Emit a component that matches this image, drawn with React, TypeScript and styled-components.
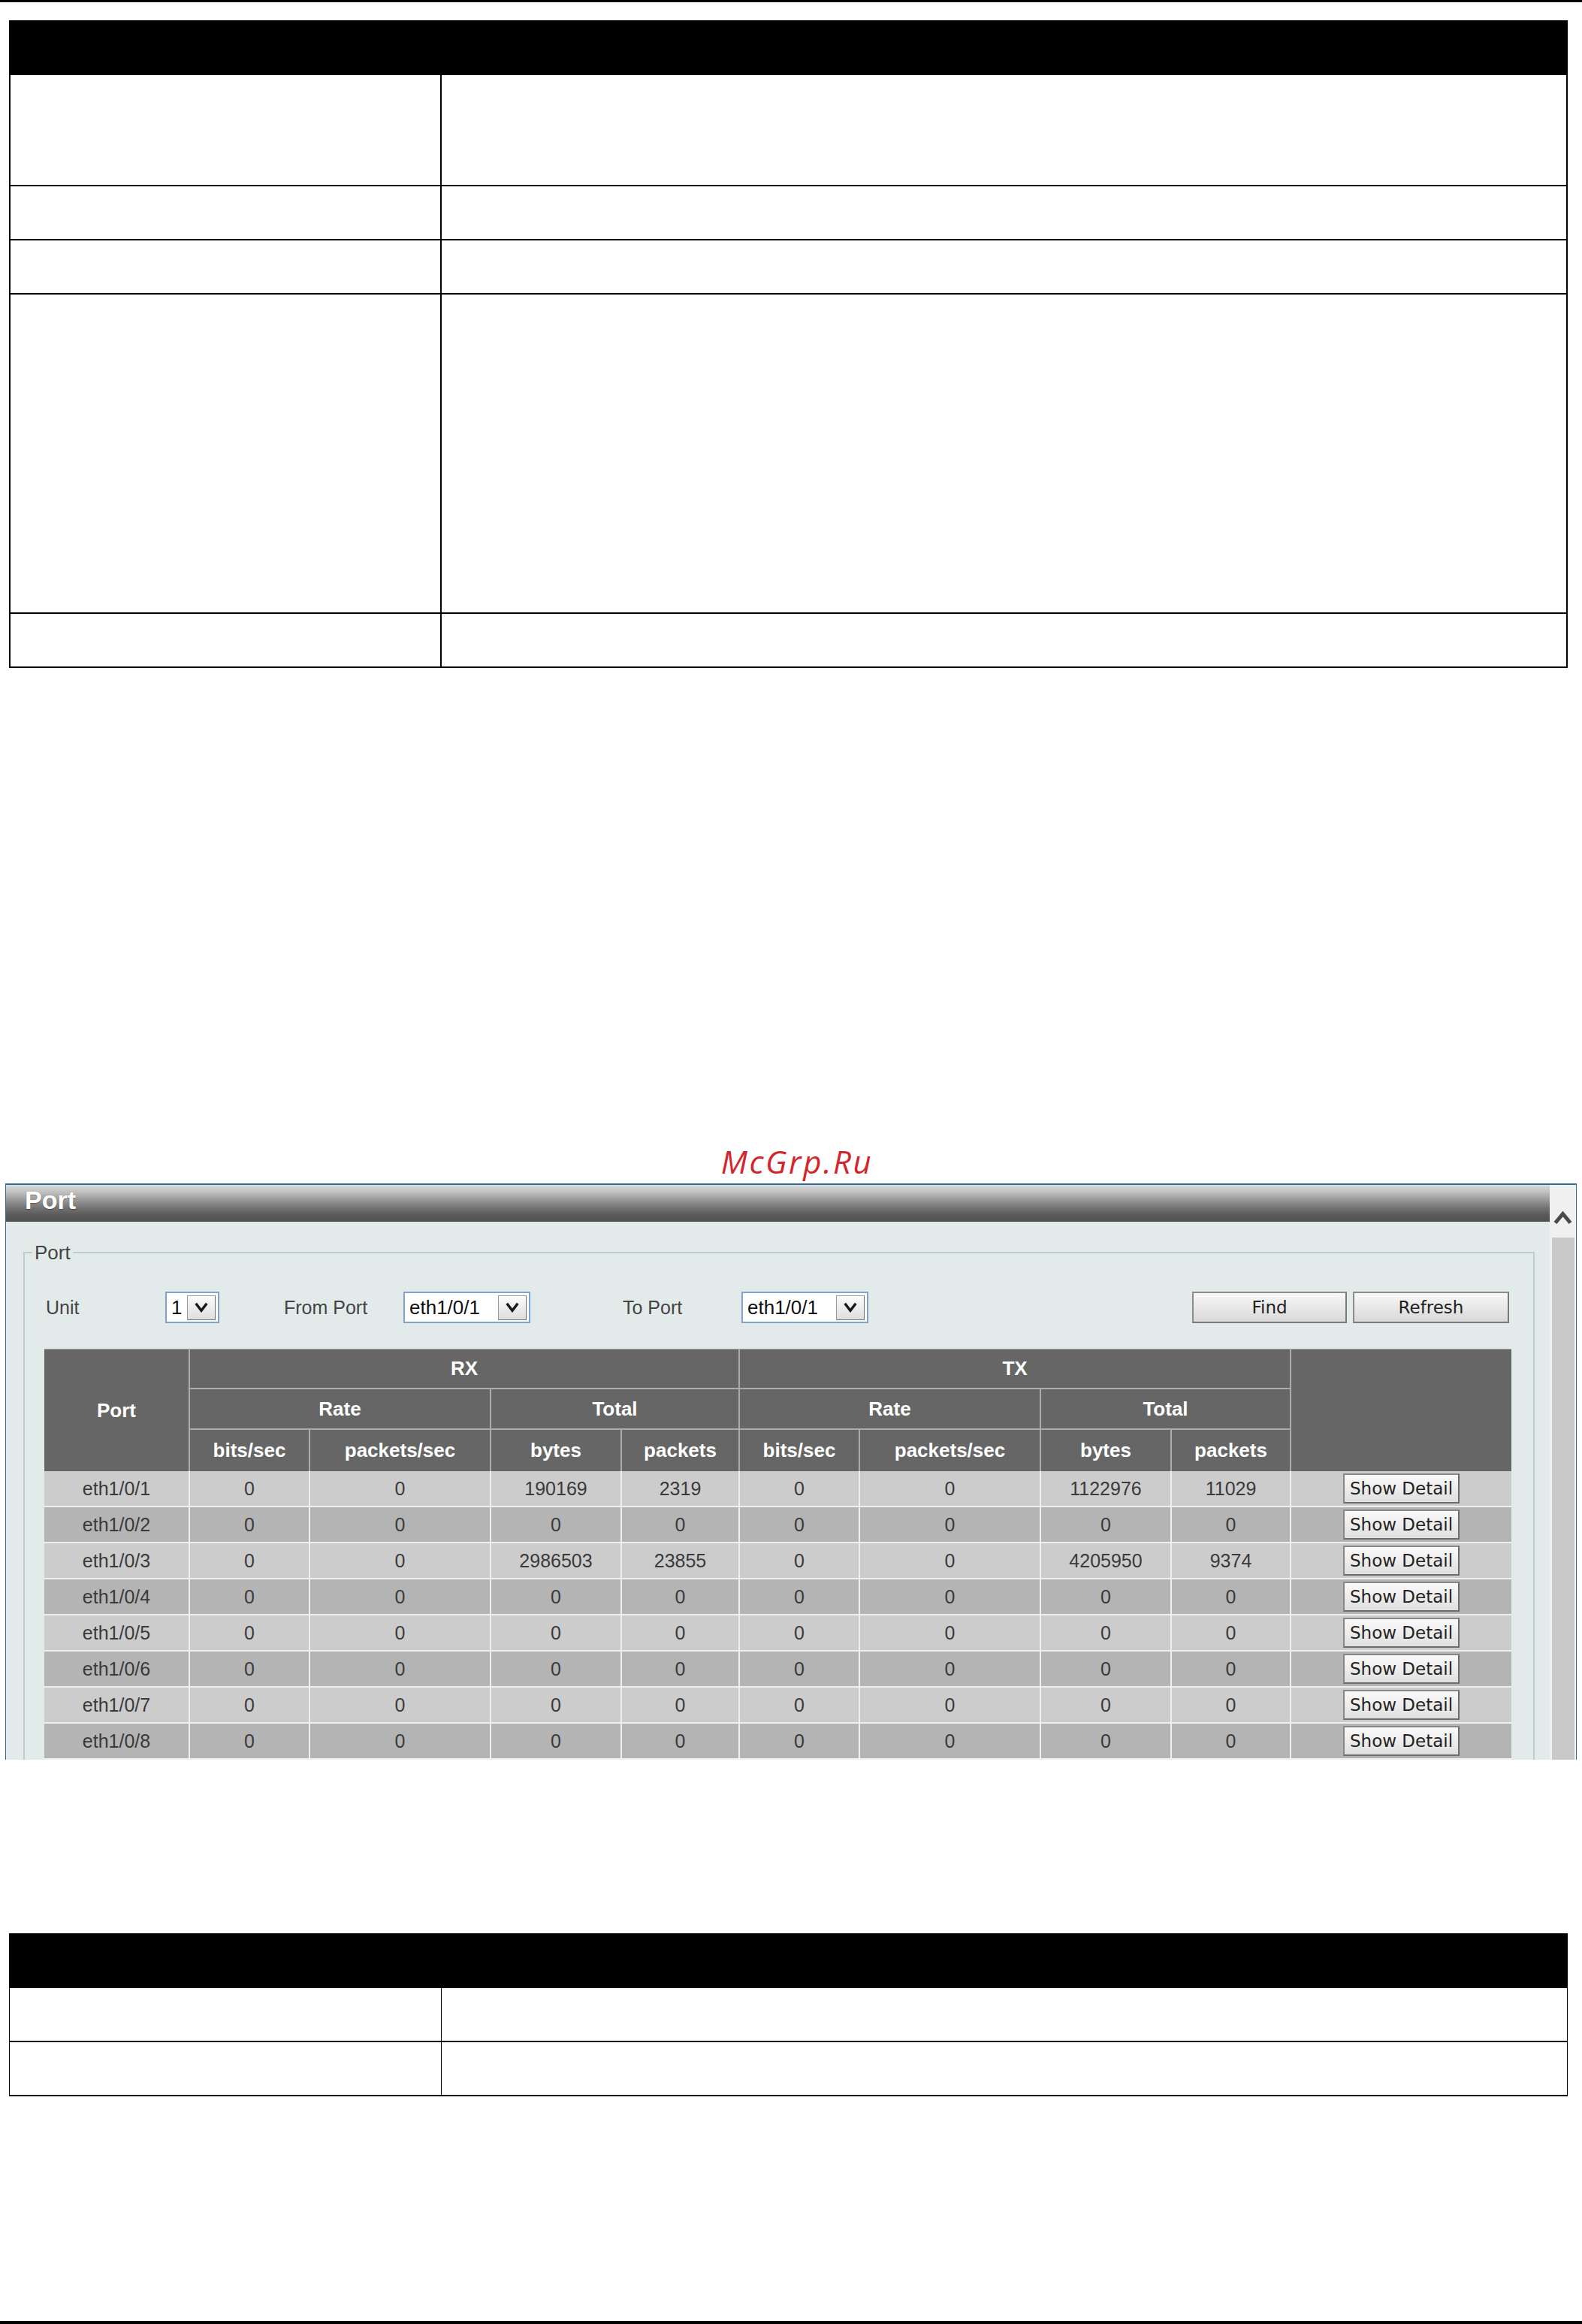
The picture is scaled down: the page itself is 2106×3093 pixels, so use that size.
import React from 'react';
import styled, { createGlobalStyle } from 'styled-components';

const Global = createGlobalStyle`
  html, body { margin: 0; padding: 0; background: #ffffff; }
  body { font-family: "Liberation Sans", Arial, sans-serif; }
  * { box-sizing: border-box; }
`;

const Page = styled.div`
  width: 2106px;
  height: 3093px;
  display: flex;
  flex-direction: column;
  overflow: hidden;
  background: #fff;
`;

const Rule = styled.div<{ $h: number; $mt?: number }>`
  flex-shrink: 0;
  height: ${(p) => p.$h}px;
  margin-top: ${(p) => p.$mt ?? 0}px;
  background: #000;
`;

const DocTable = styled.div<{ $mt: number; $vw: number }>`
  flex-shrink: 0;
  width: 2075px;
  margin: ${(p) => p.$mt}px 0 0 12px;
  border-left: ${(p) => p.$vw}px solid #000;
  border-right: ${(p) => p.$vw}px solid #000;
`;

const DocHeader = styled.div`
  height: 73px;
  background: #000;
`;

const DocRow = styled.div<{ $h: number; $first: number }>`
  display: grid;
  grid-template-columns: ${(p) => p.$first}px 1fr;
  height: ${(p) => p.$h}px;
  border-bottom: 2px solid #000;
`;

const DocCell = styled.div<{ $vw?: number }>`
  border-right: ${(p) => p.$vw ?? 0}px solid #000;
`;

const Watermark = styled.div`
  flex-shrink: 0;
  margin-top: 633px;
  height: 53px;
  padding-left: 16px;
  line-height: 48px;
  text-align: center;
  font-family: "Open Sans", "DejaVu Sans", sans-serif;
  font-style: italic;
  font-size: 42px;
  letter-spacing: 2.5px;
  color: #d3262a;
`;

const Panel = styled.section`
  flex-shrink: 0;
  width: 2092px;
  height: 767px;
  margin-left: 7px;
  border: 1px solid #2c6d9b;
  border-top-width: 2px;
  border-bottom: none;
  display: flex;
  overflow: hidden;
`;

const PanelMain = styled.div`
  flex: 1;
  min-width: 0;
  display: flex;
  flex-direction: column;
  background: #e2ebea;
`;

const TitleBar = styled.div`
  flex-shrink: 0;
  height: 49px;
  padding-left: 25px;
  background: linear-gradient(
    to bottom,
    #dadada 0%,
    #c2c2c2 18%,
    #9a9a9a 40%,
    #737373 62%,
    #5a5a5a 82%,
    #505050 100%
  );
  color: #fff;
  font-family: "Liberation Sans", Arial, sans-serif;
  font-weight: bold;
  font-size: 34px;
  line-height: 40px;
  text-shadow: 0 1px 1px rgba(0, 0, 0, 0.35);
`;

const ScrollTrack = styled.div`
  flex-shrink: 0;
  width: 35px;
  background: #f0f0f0;
  display: flex;
  flex-direction: column;
  align-items: center;
`;

const ScrollUp = styled.div`
  flex-shrink: 0;
  height: 70px;
  padding-top: 35px;
  display: flex;
  justify-content: center;
`;

const Thumb = styled.div`
  flex: 1;
  width: 30px;
  margin-left: 1px;
  background: #c9c9c9;
`;

const Fieldset = styled.fieldset`
  margin: 26px 20px 0 23px;
  padding: 0;
  min-width: 0;
  border: 2px solid #bccdcd;
  border-bottom: none;
`;

const Legend = styled.legend`
  margin-left: 10px;
  padding: 0 3px;
  font-size: 26px;
  line-height: 30px;
  color: #444;
`;

const FieldBody = styled.div`
  padding: 37px 29px 0 26px;
`;

const Controls = styled.div`
  display: flex;
  align-items: center;
  height: 42px;
`;

const Label = styled.span<{ $w: number; $ml?: number }>`
  flex-shrink: 0;
  width: ${(p) => p.$w}px;
  margin-left: ${(p) => p.$ml ?? 0}px;
  padding-left: 2px;
  font-size: 25px;
  color: #444;
`;

const SelectBox = styled.div<{ $w: number }>`
  flex-shrink: 0;
  width: ${(p) => p.$w}px;
  height: 42px;
  border: 2px solid #7fa3cf;
  background: #fff;
  display: flex;
  align-items: center;
  justify-content: space-between;
  padding: 0 3px 0 6px;
  font-size: 26px;
  color: #111;
`;

const DropBtn = styled.span`
  width: 38px;
  height: 33px;
  border: 1px solid #9a9a9a;
  border-right-color: #6e6e6e;
  border-bottom-color: #6e6e6e;
  background: linear-gradient(to bottom, #fbfbfb, #dedede);
  display: flex;
  align-items: center;
  justify-content: center;
`;

const Spacer = styled.div<{ $fixed?: number }>`
  flex: ${(p) => (p.$fixed !== undefined ? `0 0 ${p.$fixed}px` : '1')};
`;

const Btn = styled.button<{ $w: number; $ml?: number }>`
  flex-shrink: 0;
  width: ${(p) => p.$w}px;
  height: 42px;
  margin-left: ${(p) => p.$ml ?? 0}px;
  padding: 0;
  border: 2px solid #7a7a7a;
  border-top-color: #8c8c8c;
  border-left-color: #8c8c8c;
  background: linear-gradient(to bottom, #f8f8f8, #d9d9d9);
  font-family: "DejaVu Sans", Verdana, sans-serif;
  font-size: 23px;
  color: #222;
`;

const StatsTable = styled.table`
  margin-top: 34px;
  width: 1953px;
  table-layout: fixed;
  border-collapse: separate;
  border-spacing: 0;
  border-top: 1px solid #a9a9a9;
  font-family: "Liberation Sans", Arial, sans-serif;
  font-size: 25px;
`;

const HeadRow = styled.tr<{ $h: number }>`
  height: ${(p) => p.$h}px;
`;

const Th = styled.th<{ $noRight?: boolean; $noBottom?: boolean }>`
  padding: 0;
  background: #666666;
  color: #fff;
  font-weight: bold;
  font-size: 26px;
  text-align: center;
  border-right: ${(p) => (p.$noRight ? 'none' : '2px solid #ababab')};
  border-bottom: ${(p) => (p.$noBottom ? 'none' : '2px solid #ababab')};
`;

const DataRow = styled.tr<{ $alt: boolean }>`
  height: 48px;
  background: ${(p) => (p.$alt ? '#b4b4b4' : '#cccccc')};
`;

const Td = styled.td<{ $last?: boolean }>`
  padding: 0;
  text-align: center;
  color: #3a3a3a;
  border-right: ${(p) => (p.$last ? 'none' : '2px solid #efefef')};
  border-bottom: 2px solid #efefef;
`;

const DetailBtn = styled.button`
  display: block;
  margin: 0 auto;
  width: 155px;
  height: 40px;
  padding: 0;
  border: 2px solid #6c6c6c;
  border-top-color: #888;
  border-left-color: #888;
  background: linear-gradient(to bottom, #fafafa, #dfdfdf);
  font-family: "DejaVu Sans", Verdana, sans-serif;
  font-size: 23px;
  color: #222;
`;

const Chevron = ({ w, h, sw, up }: { w: number; h: number; sw: number; up?: boolean }) => (
  <svg width={w} height={h} viewBox={`0 0 ${w} ${h}`}>
    <polyline
      points={
        up
          ? `${sw / 2},${h - sw / 2} ${w / 2},${sw / 2 + 1} ${w - sw / 2},${h - sw / 2}`
          : `${sw / 2},${sw / 2} ${w / 2},${h - sw / 2 - 1} ${w - sw / 2},${sw / 2}`
      }
      fill="none"
      stroke={up ? '#4a4a4a' : '#1a1a1a'}
      strokeWidth={sw}
      strokeLinejoin="miter"
    />
  </svg>
);

const Select = ({ w, value }: { w: number; value: string }) => (
  <SelectBox $w={w}>
    <span>{value}</span>
    <DropBtn>
      <Chevron w={18} h={14} sw={3.5} />
    </DropBtn>
  </SelectBox>
);

type Row = [string, string, string, string, string, string, string, string, string];

const rows: Row[] = [
  ['eth1/0/1', '0', '0', '190169', '2319', '0', '0', '1122976', '11029'],
  ['eth1/0/2', '0', '0', '0', '0', '0', '0', '0', '0'],
  ['eth1/0/3', '0', '0', '2986503', '23855', '0', '0', '4205950', '9374'],
  ['eth1/0/4', '0', '0', '0', '0', '0', '0', '0', '0'],
  ['eth1/0/5', '0', '0', '0', '0', '0', '0', '0', '0'],
  ['eth1/0/6', '0', '0', '0', '0', '0', '0', '0', '0'],
  ['eth1/0/7', '0', '0', '0', '0', '0', '0', '0', '0'],
  ['eth1/0/8', '0', '0', '0', '0', '0', '0', '0', '0'],
];

const colWidths = [194, 160, 241, 174, 157, 160, 241, 174, 159, 293];

const DocTableBlock = ({ mt, vw, heights }: { mt: number; vw: number; heights: number[] }) => (
  <DocTable $mt={mt} $vw={vw}>
    <DocHeader />
    {heights.map((h, i) => (
      <DocRow key={i} $h={h} $first={576 - vw}>
        <DocCell $vw={vw} />
        <DocCell />
      </DocRow>
    ))}
  </DocTable>
);

export default function App() {
  return (
    <>
      <Global />
      <Page>
        <Rule $h={3} />
        <DocTableBlock mt={24} vw={2} heights={[148, 72, 72, 425, 72]} />
        <Watermark>McGrp.Ru</Watermark>
        <Panel>
          <PanelMain>
            <TitleBar>Port</TitleBar>
            <Fieldset>
              <Legend>Port</Legend>
              <FieldBody>
                <Controls>
                  <Label $w={161}>Unit</Label>
                  <Select w={72} value="1" />
                  <Label $w={161} $ml={84}>From Port</Label>
                  <Select w={169} value="eth1/0/1" />
                  <Label $w={160} $ml={121}>To Port</Label>
                  <Select w={169} value="eth1/0/1" />
                  <Spacer />
                  <Btn $w={206}>Find</Btn>
                  <Btn $w={208} $ml={8}>Refresh</Btn>
                  <Spacer $fixed={3} />
                </Controls>
                <StatsTable>
                  <colgroup>
                    {colWidths.map((w, i) => (
                      <col key={i} style={{ width: w }} />
                    ))}
                  </colgroup>
                  <thead>
                    <HeadRow $h={53}>
                      <Th rowSpan={3} $noBottom>Port</Th>
                      <Th colSpan={4}>RX</Th>
                      <Th colSpan={4}>TX</Th>
                      <Th rowSpan={3} $noBottom $noRight />
                    </HeadRow>
                    <HeadRow $h={54}>
                      <Th colSpan={2}>Rate</Th>
                      <Th colSpan={2}>Total</Th>
                      <Th colSpan={2}>Rate</Th>
                      <Th colSpan={2}>Total</Th>
                    </HeadRow>
                    <HeadRow $h={55}>
                      <Th $noBottom>bits/sec</Th>
                      <Th $noBottom>packets/sec</Th>
                      <Th $noBottom>bytes</Th>
                      <Th $noBottom>packets</Th>
                      <Th $noBottom>bits/sec</Th>
                      <Th $noBottom>packets/sec</Th>
                      <Th $noBottom>bytes</Th>
                      <Th $noBottom>packets</Th>
                    </HeadRow>
                  </thead>
                  <tbody>
                    {rows.map((r, i) => (
                      <DataRow key={r[0]} $alt={i % 2 === 1}>
                        {r.map((v, j) => (
                          <Td key={j}>{v}</Td>
                        ))}
                        <Td $last>
                          <DetailBtn>Show Detail</DetailBtn>
                        </Td>
                      </DataRow>
                    ))}
                  </tbody>
                </StatsTable>
              </FieldBody>
            </Fieldset>
          </PanelMain>
          <ScrollTrack>
            <ScrollUp>
              <Chevron w={25} h={18} sw={5} up />
            </ScrollUp>
            <Thumb />
          </ScrollTrack>
        </Panel>
        <DocTableBlock mt={231} vw={1} heights={[72, 72]} />
        <Rule $h={4} $mt={299} />
      </Page>
    </>
  );
}
